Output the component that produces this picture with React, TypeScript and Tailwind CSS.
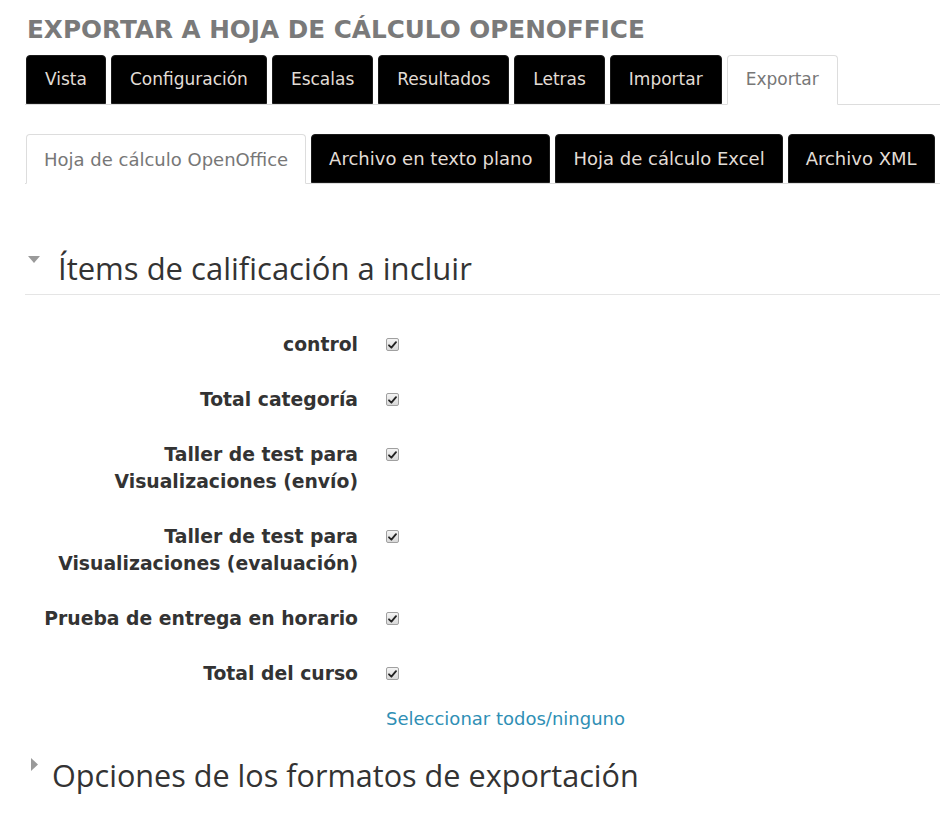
import React from 'react';

const topTabs = ['Vista', 'Configuración', 'Escalas', 'Resultados', 'Letras', 'Importar', 'Exportar'];
const subTabs = ['Hoja de cálculo OpenOffice', 'Archivo en texto plano', 'Hoja de cálculo Excel', 'Archivo XML'];

const items = [
  ['control'],
  ['Total categoría'],
  ['Taller de test para', 'Visualizaciones (envío)'],
  ['Taller de test para', 'Visualizaciones (evaluación)'],
  ['Prueba de entrega en horario'],
  ['Total del curso'],
];

function TabRow({ tabs, active, big }: { tabs: string[]; active: string; big?: boolean }) {
  return (
    <div className={`flex gap-[5px] border-b border-[#dddddd] pl-[1px] ${big ? 'text-[18px]' : 'text-[17px]'}`}>
      {tabs.map((t) =>
        t === active ? (
          <div
            key={t}
            className={`-mb-px flex h-[50px] items-center rounded-t-[4px] border border-[#dddddd] border-b-white bg-white text-[#777777] ${big ? 'px-[17px]' : 'px-[18px]'}`}
          >
            {t}
          </div>
        ) : (
          <div
            key={t}
            className={`flex h-[49px] items-center rounded-t-[4px] border border-[#1a1a1a] bg-black text-[#e2ddd6] ${big ? 'px-[17px]' : 'px-[18px]'}`}
          >
            {t}
          </div>
        )
      )}
    </div>
  );
}

function Check() {
  return (
    <span className="mt-[7px] flex h-[13px] w-[13px] items-center justify-center rounded-[2px] border border-[#a0a0a0] bg-gradient-to-b from-[#f4f4f4] to-[#d9d9d9]">
      <svg width="9" height="8" viewBox="0 0 9 8">
        <path d="M1 4.3 L3.4 6.7 L8 1.2" fill="none" stroke="#222" strokeWidth="1.8" strokeLinecap="round" strokeLinejoin="round" />
      </svg>
    </span>
  );
}

export default function App() {
  return (
    <div
      className="min-h-screen bg-white pl-[25px] pr-[9px] pt-[15px] text-[17px] text-[#333333]"
      style={{ fontFamily: '"DejaVu Sans", Verdana, sans-serif' }}
    >
      <h2 className="pl-[2px] text-[24.7px] font-bold leading-[30px] text-[#7a7a7a]">
        EXPORTAR A HOJA DE CÁLCULO OPENOFFICE
      </h2>

      <div className="mt-[10px]">
        <TabRow tabs={topTabs} active="Exportar" />
      </div>
      <div className="mt-[29px]">
        <TabRow tabs={subTabs} active="Hoja de cálculo OpenOffice" big />
      </div>

      <div className="mt-[64px] flex items-center border-b border-[#e5e5e5] pb-[6px]">
        <svg width="12" height="7" viewBox="0 0 12 7" className="ml-[3px] mt-[-18px]">
          <path d="M0 0 L12 0 L6 7 Z" fill="#9a9a9a" />
        </svg>
        <h3
          className="ml-[18px] text-[31px] leading-[40px] text-[#333333]"
          style={{ fontFamily: '"Open Sans", sans-serif' }}
        >
          Ítems de calificación a incluir
        </h3>
      </div>

      <div className="mt-[36px] flex flex-col gap-[28px]">
        {items.map((lines, i) => (
          <div key={i} className="grid grid-cols-[333px_1fr] gap-x-[28px]">
            <div className="text-right text-[18.8px] font-bold leading-[27px] text-[#333333]">
              {lines.map((l) => (
                <div key={l}>{l}</div>
              ))}
            </div>
            <div>
              <Check />
            </div>
          </div>
        ))}
        <div className="-mt-[6px] grid grid-cols-[333px_1fr] gap-x-[28px]">
          <div />
          <a className="text-[18px] leading-[20px] text-[#2f8fb5]">Seleccionar todos/ninguno</a>
        </div>
      </div>

      <div className="mt-[26px] flex items-start">
        <svg width="7" height="13" viewBox="0 0 7 13" className="ml-[6px] mt-[3px]">
          <path d="M0 0 L7 6.5 L0 13 Z" fill="#9a9a9a" />
        </svg>
        <h3
          className="ml-[14px] text-[30.6px] leading-[40px] text-[#333333]"
          style={{ fontFamily: '"Open Sans", sans-serif' }}
        >
          Opciones de los formatos de exportación
        </h3>
      </div>
    </div>
  );
}
